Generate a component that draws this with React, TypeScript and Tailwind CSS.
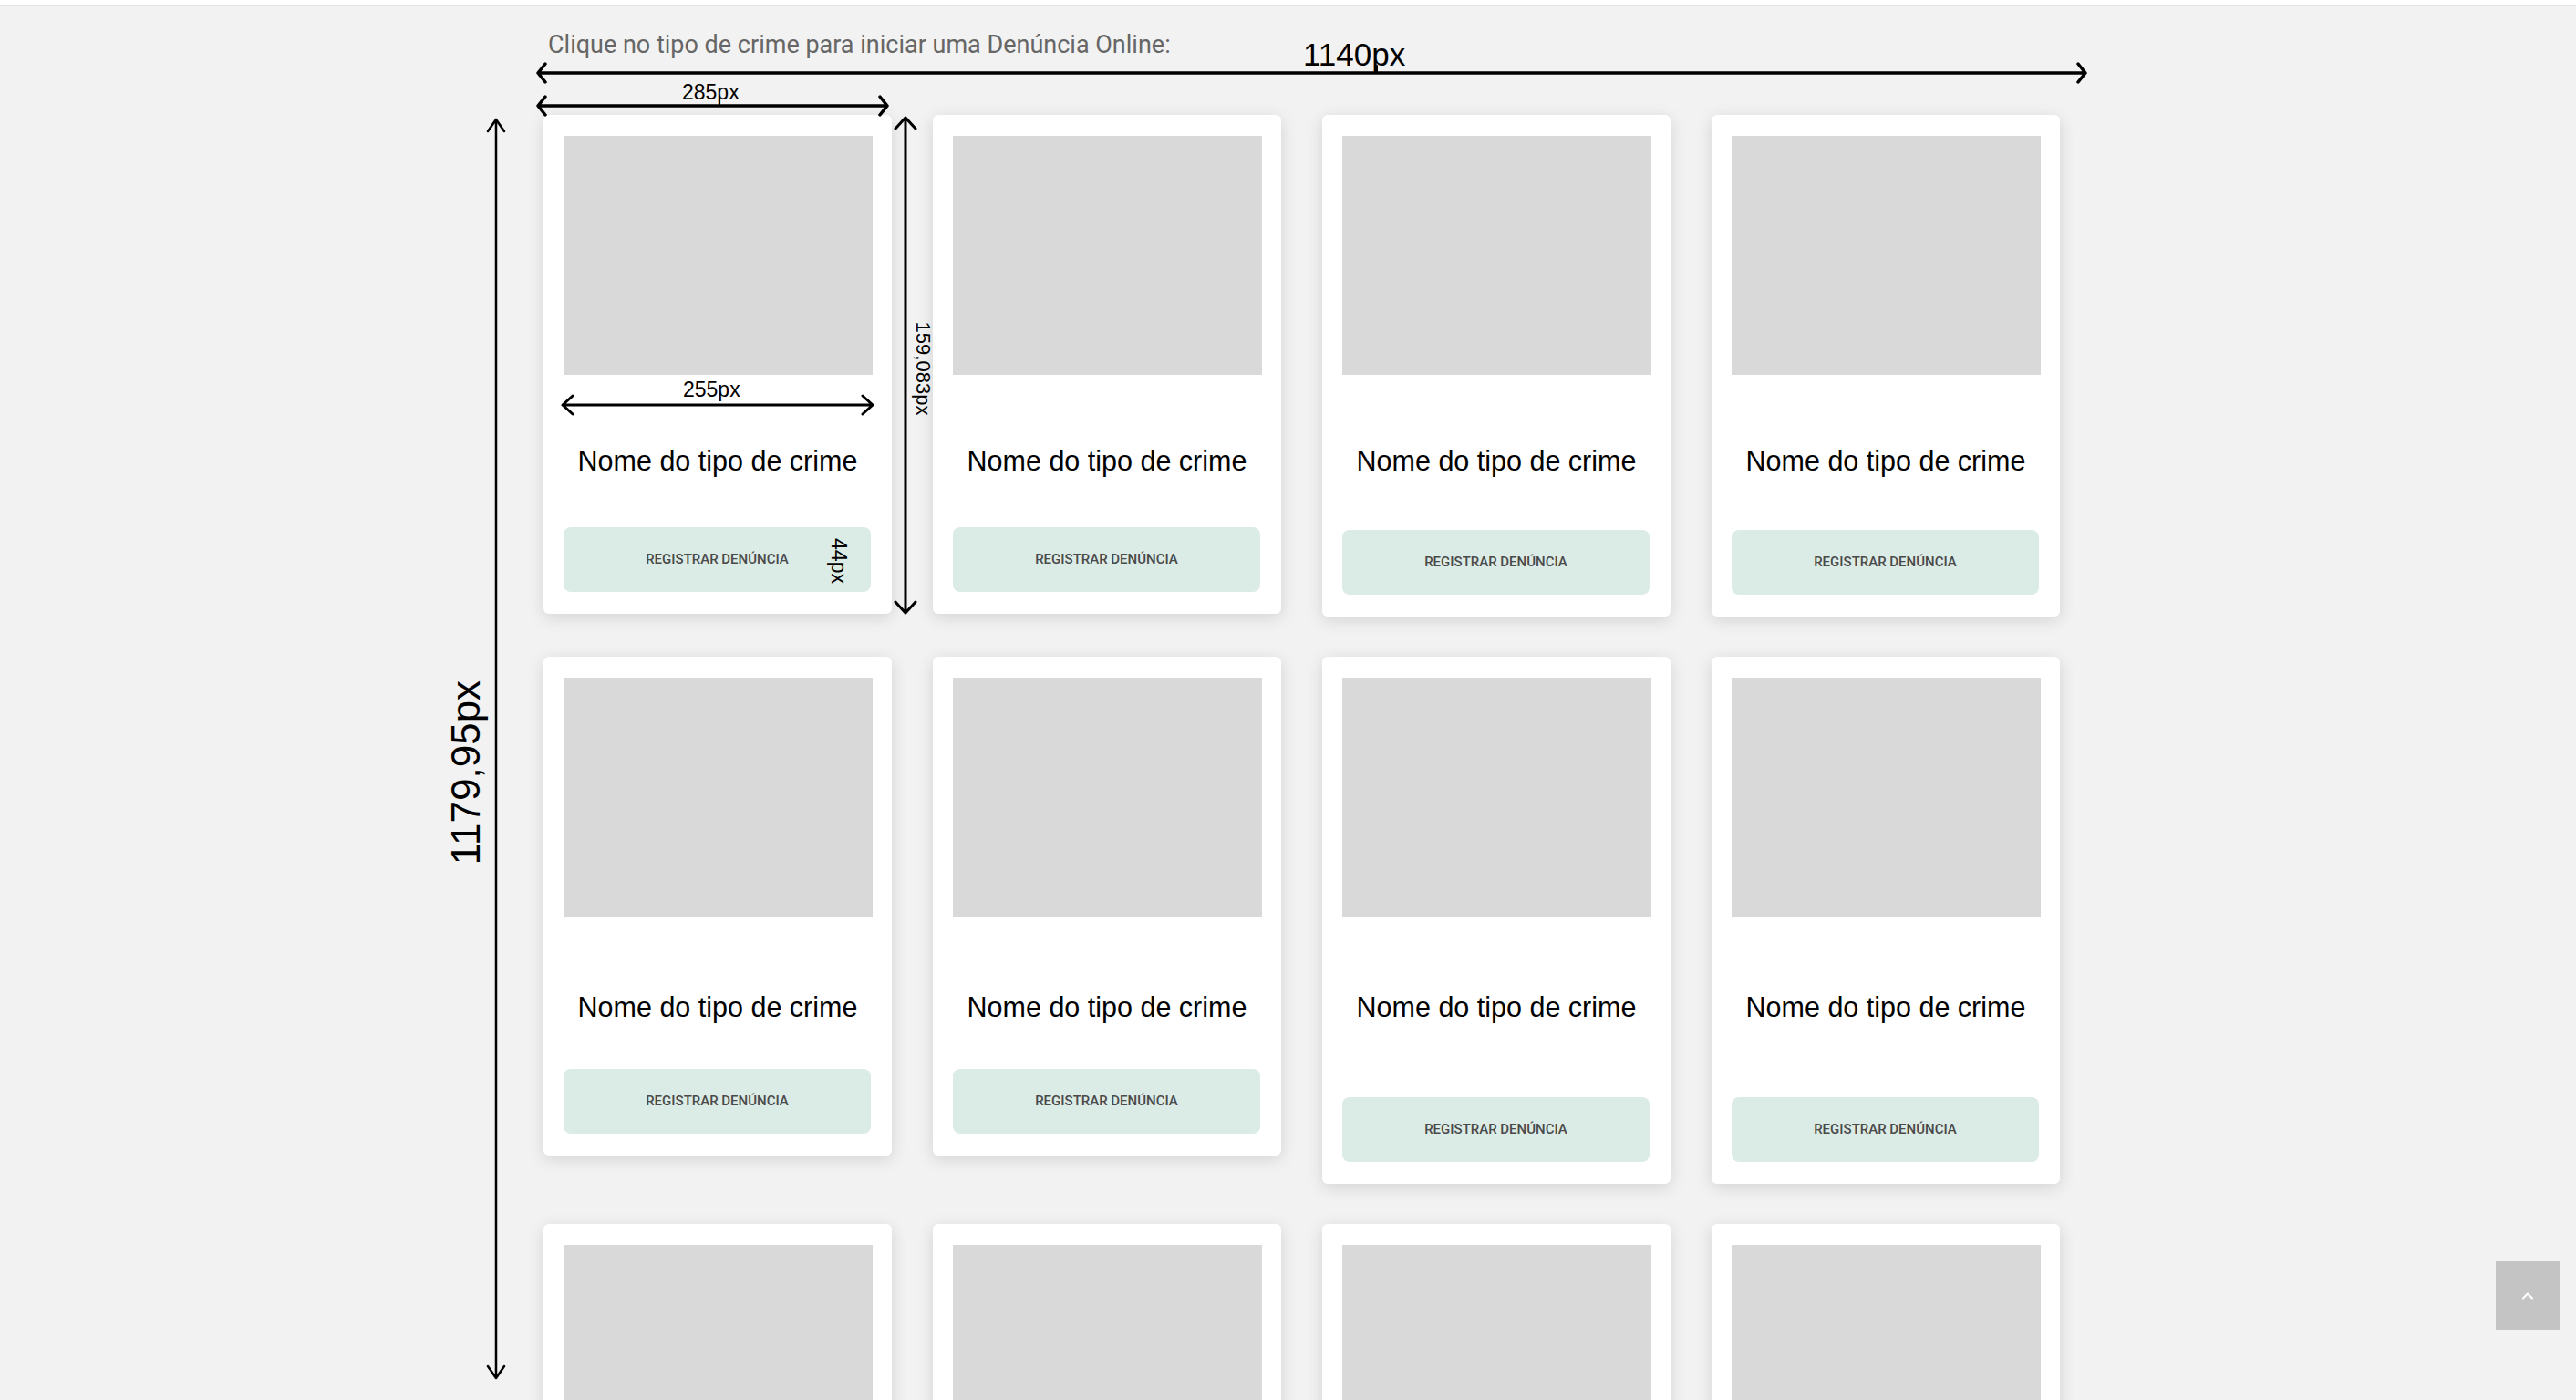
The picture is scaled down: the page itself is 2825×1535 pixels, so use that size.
import { ChevronUp } from "lucide-react";

// title / button top margins, taken from the mockup (the cards are not perfectly even)
type Card = { title?: number; button?: number };

const rows: Card[][] = [
  [{}, {}, { button: 58 }, { button: 58 }],
  [{ title: 81, button: 50 }, { title: 81, button: 50 }, { title: 81, button: 81 }, { title: 81, button: 81 }],
  [{}, {}, {}, {}],
];

function CrimeCard({ title = 76, button = 55 }: Card) {
  return (
    <div className="flex w-[382px] flex-col rounded-[6px] bg-white px-[22px] pt-[23px] pb-[24px] shadow-[0_4px_18px_rgba(0,0,0,0.13)]">
      <div className="h-[262px] w-[339px] bg-[#d9d9d9]" />
      <h3
        className="text-center font-['Liberation_Sans',Arial,sans-serif] text-[30.5px] leading-[36px] text-black"
        style={{ marginTop: title }}
      >
        Nome do tipo de crime
      </h3>
      <button
        className="flex h-[71px] w-[337px] items-center justify-center rounded-[8px] bg-[#dbebe6] font-['Roboto',sans-serif] text-[15px] font-medium text-[#4a4a4a]"
        style={{ marginTop: button }}
      >
        REGISTRAR DENÚNCIA
      </button>
    </div>
  );
}

function hArrow(x1: number, x2: number, y: number, d: number, a: number) {
  return `M${x1} ${y}H${x2}M${x1 + d} ${y - a}L${x1} ${y}L${x1 + d} ${y + a}M${x2 - d} ${y - a}L${x2} ${y}L${x2 - d} ${y + a}`;
}

function vArrow(x: number, y1: number, y2: number, d: number, a: number) {
  return `M${x} ${y1}V${y2}M${x - a} ${y1 + d}L${x} ${y1}L${x + a} ${y1 + d}M${x - a} ${y2 - d}L${x} ${y2}L${x + a} ${y2 - d}`;
}

// dimension annotations drawn over the mockup
function Annotations() {
  return (
    <>
      <svg className="pointer-events-none absolute left-0 top-0" width={2825} height={1535}>
        <g fill="none" stroke="#000" strokeLinecap="round" strokeLinejoin="round">
          <path d={hArrow(590, 2287, 80, 8, 10)} strokeWidth={3.5} />
          <path d="M1510 72V80" strokeWidth={2} />
          <path d={hArrow(590, 973, 116, 8, 10)} strokeWidth={3.5} />
          <path d="M789 108V116" strokeWidth={2} />
          <path d={hArrow(617, 957, 444, 11, 10)} strokeWidth={3} />
          <path d={vArrow(993, 129, 672, 12, 11)} strokeWidth={3} />
          <path d={vArrow(544, 131, 1511, 13, 9)} strokeWidth={2.5} />
        </g>
      </svg>
      <span className="absolute left-[1429px] top-[42px] font-['Liberation_Sans',Arial,sans-serif] text-[35px] leading-[35px] text-black">
        1140px
      </span>
      <span className="absolute left-[748px] top-[90px] font-['Liberation_Sans',Arial,sans-serif] text-[23px] leading-[23px] text-black">
        285px
      </span>
      <span className="absolute left-[749px] top-[416px] font-['Liberation_Sans',Arial,sans-serif] text-[23px] leading-[23px] text-black">
        255px
      </span>
      <span className="absolute left-[1012px] top-[404px] -translate-x-1/2 -translate-y-1/2 rotate-90 whitespace-nowrap font-['Liberation_Sans',Arial,sans-serif] text-[22px] leading-[22px] text-black">
        159,083px
      </span>
      <span className="absolute left-[919px] top-[615px] -translate-x-1/2 -translate-y-1/2 rotate-90 whitespace-nowrap font-['Liberation_Sans',Arial,sans-serif] text-[23px] leading-[23px] text-black">
        44px
      </span>
      <span className="absolute left-[511px] top-[847px] -translate-x-1/2 -translate-y-1/2 -rotate-90 whitespace-nowrap font-['Liberation_Sans',Arial,sans-serif] text-[44px] leading-[44px] text-black">
        1179,95px
      </span>
    </>
  );
}

export default function App() {
  return (
    <div className="relative h-[1535px] w-full overflow-hidden bg-[#f2f2f2]">
      <div className="h-[7px] border-b border-[#e2e2e2] bg-white" />

      <main className="ml-[596px] w-[1663px]">
        <p className="mt-[26px] pl-[5px] font-['Roboto',sans-serif] text-[27px] leading-[32px] text-[#666]">
          Clique no tipo de crime para iniciar uma Denúncia Online:
        </p>

        <div className="mt-[61px] grid grid-cols-[repeat(4,382px)] items-start gap-x-[45px] gap-y-[44px]">
          {rows.flatMap((row, r) =>
            row.map((card, c) => <CrimeCard key={`${r}-${c}`} {...card} />)
          )}
        </div>
      </main>

      <Annotations />

      <button className="absolute right-[18px] bottom-[77px] flex h-[75px] w-[70px] items-center justify-center bg-[#c4c4c4]">
        <ChevronUp className="h-5 w-5 text-white" strokeWidth={2.5} />
      </button>
    </div>
  );
}
